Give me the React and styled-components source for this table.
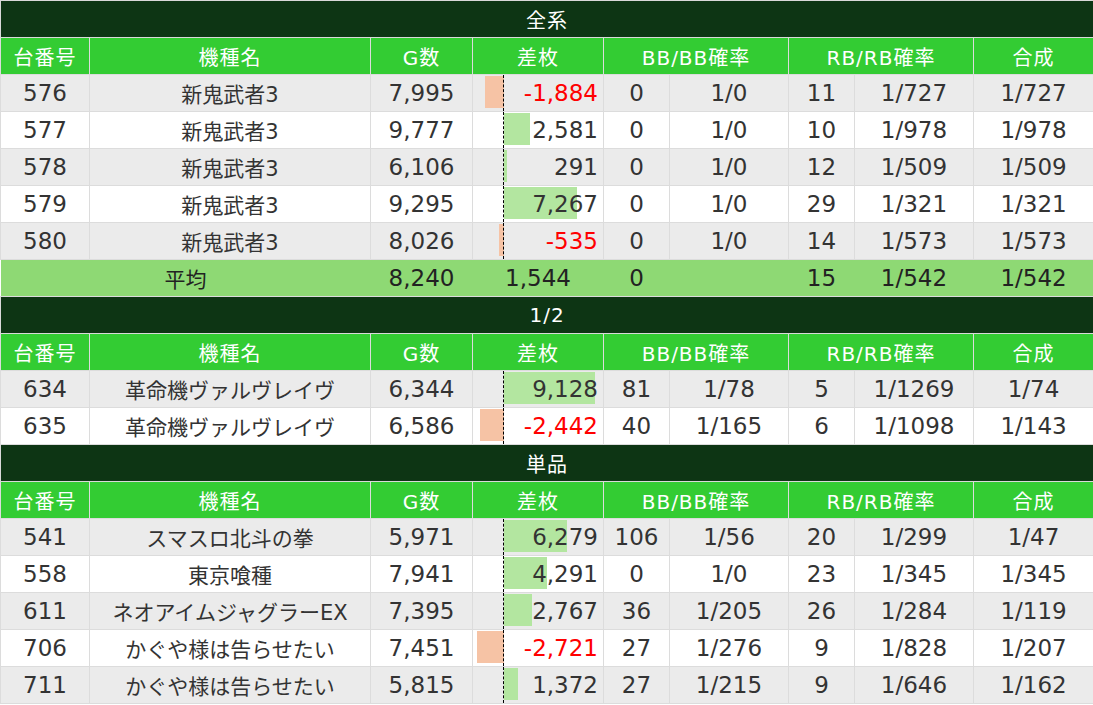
import React from "react";
import styled, { createGlobalStyle } from "styled-components";

const GlobalStyle = createGlobalStyle`
  html, body {
    margin: 0;
    padding: 0;
    background: #fff;
  }
  body {
    font-family: "DejaVu Sans", "Noto Sans CJK JP", sans-serif;
  }
`;

const sections = [
  {
    title: "全系",
    rows: [
      ["576", "新鬼武者3", "7,995", -1884, "0", "1/0", "11", "1/727", "1/727"],
      ["577", "新鬼武者3", "9,777", 2581, "0", "1/0", "10", "1/978", "1/978"],
      ["578", "新鬼武者3", "6,106", 291, "0", "1/0", "12", "1/509", "1/509"],
      ["579", "新鬼武者3", "9,295", 7267, "0", "1/0", "29", "1/321", "1/321"],
      ["580", "新鬼武者3", "8,026", -535, "0", "1/0", "14", "1/573", "1/573"],
    ],
    avg: ["8,240", "1,544", "0", "", "15", "1/542", "1/542"],
  },
  {
    title: "1/2",
    rows: [
      ["634", "革命機ヴァルヴレイヴ", "6,344", 9128, "81", "1/78", "5", "1/1269", "1/74"],
      ["635", "革命機ヴァルヴレイヴ", "6,586", -2442, "40", "1/165", "6", "1/1098", "1/143"],
    ],
  },
  {
    title: "単品",
    rows: [
      ["541", "スマスロ北斗の拳", "5,971", 6279, "106", "1/56", "20", "1/299", "1/47"],
      ["558", "東京喰種", "7,941", 4291, "0", "1/0", "23", "1/345", "1/345"],
      ["611", "ネオアイムジャグラーEX", "7,395", 2767, "36", "1/205", "26", "1/284", "1/119"],
      ["706", "かぐや様は告らせたい", "7,451", -2721, "27", "1/276", "9", "1/828", "1/207"],
      ["711", "かぐや様は告らせたい", "5,815", 1372, "27", "1/215", "9", "1/646", "1/162"],
    ],
  },
];

const widths = [89, 281, 102, 131, 66, 119, 66, 119, 120];

const Table = styled.table`
  width: 1093px;
  border-collapse: collapse;
  table-layout: fixed;
  font-size: 23px;
  color: #333;
`;

const TitleCell = styled.td`
  height: 36px;
  padding: 0;
  background: #0d3514;
  color: #fff;
  font-size: 20px;
  letter-spacing: 1px;
  text-align: center;
  border: 1px solid #d9d9d9;
`;

const HeadCell = styled.th`
  height: 36px;
  padding: 0;
  background: #33cc33;
  color: #fff;
  font-size: 20px;
  letter-spacing: 1px;
  font-weight: normal;
  text-align: center;
  border: 1px solid #dcdcdc;
`;

const Row = styled.tr`
  background: ${(p) => (p.$odd ? "#ebebeb" : "#fff")};
`;

const Cell = styled.td`
  height: 36px;
  padding: 0;
  text-align: center;
  white-space: nowrap;
  font-size: ${(p) => (p.$name ? "21px" : "23px")};
  border: 1px solid #dcdcdc;
`;

const AvgRow = styled.tr`
  background: #8ed974;
  color: #222;
`;

const AvgCell = styled.td`
  height: 36px;
  padding: 0;
  text-align: center;
  font-size: ${(p) => (p.$name ? "21px" : "23px")};
  border-top: 1px solid #dcdcdc;
  border-bottom: 1px solid #dcdcdc;
`;

const DiffCell = styled.td`
  height: 36px;
  padding: 0;
  border: 1px solid #dcdcdc;
  position: relative;
`;

const Axis = styled.div`
  position: absolute;
  left: 30px;
  top: 0;
  bottom: 0;
  border-left: 1px dashed #000;
`;

const Bar = styled.div`
  position: absolute;
  top: 1px;
  bottom: 3px;
  background: ${(p) => (p.$neg ? "#f6c3a5" : "#b3e6a0")};
`;

const DiffText = styled.span`
  position: relative;
  display: block;
  text-align: right;
  padding-right: 5px;
  color: ${(p) => (p.$neg ? "#f00" : "#333")};
`;

const fmt = (n) => (n < 0 ? "-" : "") + Math.abs(n).toLocaleString("en-US");

const Diff = ({ value }) => {
  const neg = value < 0;
  const w = Math.abs(value) / 100;
  return (
    <DiffCell>
      <Bar $neg={neg} style={neg ? { left: 31 - w, width: w } : { left: 31, width: w }} />
      <Axis />
      <DiffText $neg={neg}>{fmt(value)}</DiffText>
    </DiffCell>
  );
};

const Section = ({ section }) => (
  <>
    <tr>
      <TitleCell colSpan={9}>{section.title}</TitleCell>
    </tr>
    <tr>
      <HeadCell>台番号</HeadCell>
      <HeadCell>機種名</HeadCell>
      <HeadCell>G数</HeadCell>
      <HeadCell>差枚</HeadCell>
      <HeadCell colSpan={2}>BB/BB確率</HeadCell>
      <HeadCell colSpan={2}>RB/RB確率</HeadCell>
      <HeadCell>合成</HeadCell>
    </tr>
    {section.rows.map((r, i) => (
      <Row key={r[0]} $odd={i % 2 === 0}>
        <Cell>{r[0]}</Cell>
        <Cell $name>{r[1]}</Cell>
        <Cell>{r[2]}</Cell>
        <Diff value={r[3]} />
        <Cell>{r[4]}</Cell>
        <Cell>{r[5]}</Cell>
        <Cell>{r[6]}</Cell>
        <Cell>{r[7]}</Cell>
        <Cell>{r[8]}</Cell>
      </Row>
    ))}
    {section.avg && (
      <AvgRow>
        <AvgCell colSpan={2} $name>平均</AvgCell>
        {section.avg.map((v, i) => (
          <AvgCell key={i}>{v}</AvgCell>
        ))}
      </AvgRow>
    )}
  </>
);

export default function App() {
  return (
    <>
      <GlobalStyle />
      <Table>
        <colgroup>
          {widths.map((w, i) => (
            <col key={i} style={{ width: w }} />
          ))}
        </colgroup>
        <tbody>
          {sections.map((s) => (
            <Section key={s.title} section={s} />
          ))}
        </tbody>
      </Table>
    </>
  );
}
